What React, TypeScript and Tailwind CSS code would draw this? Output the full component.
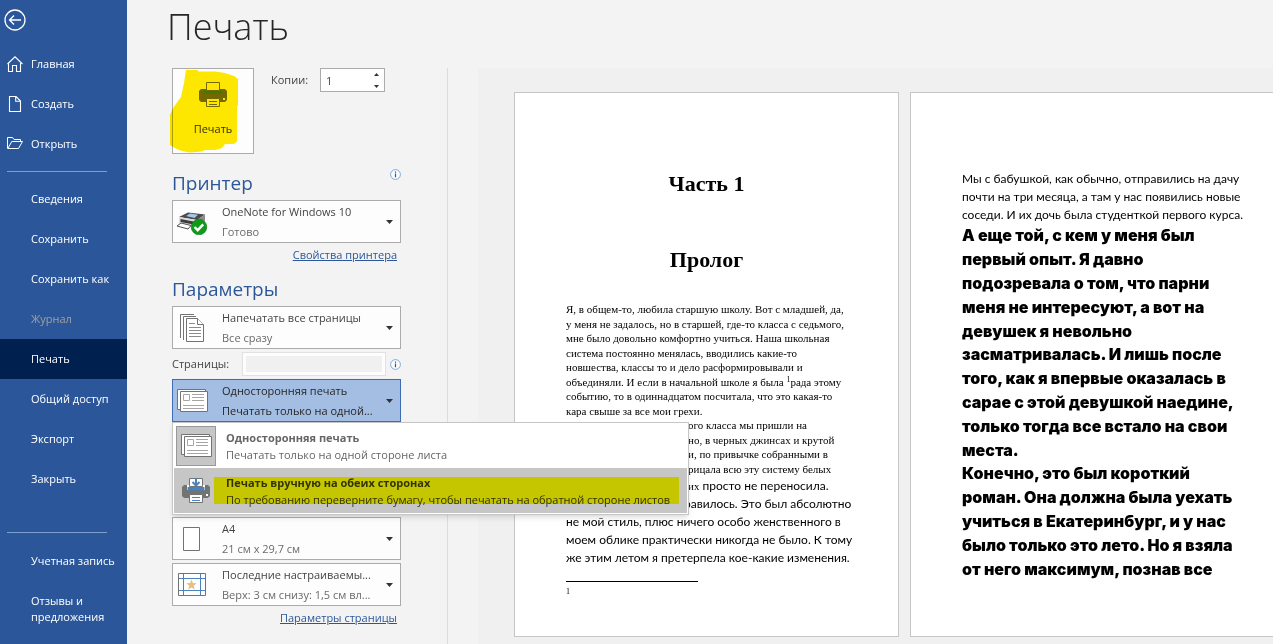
import type { ReactNode } from 'react';
import clsx from 'clsx';

const UI_FONT = 'font-["Open_Sans","Noto_Sans",sans-serif]';

function BackIcon() {
  return (
    <svg width="22" height="22" viewBox="0 0 22 22" fill="none" stroke="#fff" strokeWidth="1.3">
      <circle cx="11" cy="11" r="10" />
      <path d="M17 11H5.5M10 6.5 5.5 11l4.500 4.500" />
    </svg>
  );
}

function HomeIcon() {
  return (
    <svg width="16" height="16" viewBox="0 0 16 16" fill="none" stroke="#fff" strokeWidth="1.100">
      <path d="M.5 8 8 .8 15.500 8M1.500 7v8.500h4V9.500h4v6h4V7" />
    </svg>
  );
}

function NewIcon() {
  return (
    <svg width="16" height="16" viewBox="0 0 16 16" fill="none" stroke="#fff" strokeWidth="1.100">
      <path d="M2.500.5h6.500l4.500 4.500v10.500h-11zM8.700.5v4.800h4.800" />
    </svg>
  );
}

function OpenIcon() {
  return (
    <svg width="16" height="16" viewBox="0 0 16 16" fill="none" stroke="#fff">
      <path d="M.5 12.500V1.500h5l1.500 2h6.500v2M.8 12.500h10.700l4-7H4.800l-4 7" />
    </svg>
  );
}

function InfoIcon() {
  return (
    <svg width="11" height="11" viewBox="0 0 11 11" fill="none">
      <circle cx="5.500" cy="5.500" r="4.900" fill="#fdfdfd" stroke="#82a6dc" />
      <path d="M5.500 4.600v3.600M5.500 2.500v1.200" stroke="#2b579a" strokeWidth="1.200" />
    </svg>
  );
}

function PrinterIcon({ manual = false }: { manual?: boolean }) {
  return (
    <svg width="28" height="26" viewBox="0 0 28 26" fill="none">
      <path d="M2 7h24l2 2v9l-2 2H2l-2-2V9z" fill="#737373" />
      <path d="M5 7h18v5H5z" fill={manual ? '#fff' : '#4a82bd'} />
      <path d="M7.500.5h13v8h-13z" fill="#fdfdfd" stroke="#737373" />
      {manual && <path d="M5.500 9v3.500h17V9" fill="#4a82bd" />}
      {manual && <path d="M14 0v7M10.500 4 14 7.500 17.500 4" stroke="#4a82bd" strokeWidth="2" />}
      <path d="M7.500 16.500h13v8h-13z" fill="#fdfdfd" stroke="#737373" />
      <path d="M10 19.500h8M10 22.500h8" stroke={manual ? '#4a82bd' : '#737373'} />
      <path d="M24 16h2v2h-2z" fill="#fdfdfd" />
    </svg>
  );
}

function ReadyPrinterIcon() {
  return (
    <svg width="32" height="26" viewBox="0 0 32 26" fill="none">
      <path d="M3 8 12 3.500l17 2-8 5.500z" fill="#4a4a4a" />
      <path d="m10 7 4-2.500 8 1.200-3.500 3.300z" fill="#a5c8ea" />
      <path d="m3 8 18 3v8L3 14.500z" fill="#dcdcdc" />
      <path d="m21 11 8-5.500v6l-8 7.500z" fill="#8b8b8b" />
      <path d="m4.500 10 13 2.500v3l-13-2.500z" fill="#3c3c3c" />
      <path d="m1 17 4-3 10 2.500-3 3.500z" fill="#fff" stroke="#555" />
      <circle cx="23" cy="18" r="7.800" fill="#109a1a" stroke="#0b7a13" strokeWidth=".6" />
      <path d="m18.500 18 3.200 3.200 5.500-5.800" stroke="#fff" strokeWidth="2.400" />
    </svg>
  );
}

function PagesIcon() {
  return (
    <svg width="24" height="28" viewBox="0 0 24 28" fill="#fff" stroke="#737373">
      <path d="M.5 24V.5H14" />
      <path d="M3.500 26V2.500H16" />
      <path d="M6.500 4.500h11l6 6v17h-17z" />
      <path d="M17.500 4.500v6h6" />
      <path d="M9 9.500h6M9 13.500h12M9 16.500h12M9 19.500h12M9 22.500h12" stroke="#8c8c8c" />
    </svg>
  );
}

function OneSidedIcon() {
  return (
    <svg width="31" height="24" viewBox="0 0 31 24" fill="#fff" stroke="#737373">
      <path d="M3 20.500H.5V.5H28.500v2" />
      <path d="M3.500 2.500h27v20h-27z" />
      <path d="M6.500 5.500h6v6h-6zM15 5.500h12M15 8.500h12M15 11.500h12M6 16.500h21M6 19.500h21" stroke="#a6a6a6" />
    </svg>
  );
}

function PaperIcon() {
  return (
    <svg width="18" height="24" viewBox="0 0 18 24" fill="#fff" stroke="#737373">
      <path d="M.5.5h16v23H.5z" />
    </svg>
  );
}

function MarginsIcon() {
  return (
    <svg width="28" height="23" viewBox="0 0 28 23" fill="none">
      <path d="M.5.5h27v22H.5z" fill="#fff" stroke="#737373" />
      <path d="M5.500 1v21M22.500 1v21M1 5.500h26M1 17.500h26" stroke="#4a82bd" />
      <path d="m13.500 6.500 1.400 3.600 3.800.2-3 2.400 1 3.800-3.200-2.100-3.200 2.100 1-3.800-3-2.400 3.800-.2z" fill="#eabf7c" />
    </svg>
  );
}

function Rule() {
  return <hr className="ml-[7px] w-[100px] border-[#7da0d0]" />;
}

function NavItem({ icon, label, active, disabled }: { icon?: ReactNode; label: string; active?: boolean; disabled?: boolean }) {
  return (
    <button
      type="button"
      disabled={disabled}
      aria-current={active ? 'page' : undefined}
      className={clsx(
        'flex h-10 w-full items-center pl-[7px] text-left whitespace-nowrap',
        active && 'bg-[#002050]',
        disabled ? 'text-[#a0a0a0]' : 'text-white',
      )}
    >
      <span className="w-6 shrink-0">{icon}</span>
      {label}
    </button>
  );
}

function Sidebar() {
  return (
    <nav className="w-[127px] shrink-0 bg-[#2b579a] text-white">
      <button type="button" aria-label="Назад" className="mt-[9px] mb-[13px] ml-1 block">
        <BackIcon />
      </button>
      <NavItem icon={<HomeIcon />} label="Главная" />
      <NavItem icon={<NewIcon />} label="Создать" />
      <NavItem icon={<OpenIcon />} label="Открыть" />
      <div className="py-[7px]">
        <Rule />
      </div>
      <NavItem label="Сведения" />
      <NavItem label="Сохранить" />
      <NavItem label="Сохранить как" />
      <NavItem label="Журнал" disabled />
      <NavItem label="Печать" active />
      <NavItem label="Общий доступ" />
      <NavItem label="Экспорт" />
      <NavItem label="Закрыть" />
      <div className="pt-[33px] pb-2">
        <Rule />
      </div>
      <NavItem label="Учетная запись" />
      <button type="button" className="mt-3 block pl-[31px] text-left leading-4">
        Отзывы и предложения
      </button>
    </nav>
  );
}

function Combo({ icon, title, note, open }: { icon: ReactNode; title: string; note: string; open?: boolean }) {
  return (
    <button
      type="button"
      aria-haspopup="listbox"
      aria-expanded={!!open}
      className={clsx(
        'flex h-[43px] w-full items-center border pr-[7px] text-left leading-5',
        open ? 'border-[#3e6db5] bg-[#a3bde3] text-[#262626]' : 'border-[#ababab] bg-[#fdfdfd] text-[#444]',
      )}
    >
      <span className="flex w-[38px] shrink-0 justify-center">{icon}</span>
      <span className="ml-[11px] min-w-0 flex-1">
        <span className="block truncate">{title}</span>
        <span className={clsx('block truncate', !open && 'text-[#6a6a6a]')}>{note}</span>
      </span>
      <svg width="7" height="4" viewBox="0 0 7 4" className="ml-2 shrink-0">
        <path d="M0 0h7L3.500 4z" fill="#333" />
      </svg>
    </button>
  );
}

function DuplexMenu() {
  return (
    <div
      role="listbox"
      aria-label="Двусторонняя печать"
      className="absolute top-full left-0 z-10 w-[517px] border border-[#c6c6c6] bg-white p-px leading-[17px] shadow-md"
    >
      <button type="button" role="option" aria-selected="true" className="flex h-11 w-full items-center pl-[2px] text-left text-[#666]">
        <span className="flex size-10 shrink-0 items-center justify-center border border-[#999] bg-[#c6c6c6]">
          <OneSidedIcon />
        </span>
        <span className="ml-[10px] whitespace-nowrap">
          <b className="block">Односторонняя печать</b>
          Печатать только на одной стороне листа
        </span>
      </button>
      <button type="button" role="option" aria-selected="false" className="relative flex h-[45px] w-full items-center bg-[#c6c6c6] pl-[2px] text-left text-[#333]">
        <span className="flex size-10 shrink-0 items-center justify-center">
          <PrinterIcon manual />
        </span>
        <span className="ml-[10px] whitespace-nowrap">
          <b className="block">Печать вручную на обеих сторонах</b>
          По требованию переверните бумагу, чтобы печатать на обратной стороне листов
        </span>
        <span className="absolute top-[9px] right-2 left-10 h-[27px] bg-[#ffff00] mix-blend-multiply" />
      </button>
    </div>
  );
}

function Settings() {
  return (
    <section className="w-[276px] shrink-0 border-r border-[#dcdcdc] pr-[46px] text-[#444]">
      <div className="flex items-start">
        <button type="button" className="relative flex h-[86px] w-[82px] flex-col items-center border border-[#ababab] bg-[#fdfdfd] pt-[13px] text-[#333]">
          <PrinterIcon />
          <span className="mt-[11px] leading-5">Печать</span>
          <svg width="70" height="86" viewBox="0 0 70 86" className="absolute -top-px -left-[3px] mix-blend-multiply">
            <path
              d="M16 2h12v1.500h17l10 1.500 9 3 4 3v26l-1 2v33q0 3-4 4h-8q-2 4-6 5l-4 1H35l-3 1.500-12 1q-9-1-17-5.500L0 77V47l3-7 8-11 3-14z"
              fill="#ffe900"
            />
          </svg>
        </button>
        <label htmlFor="copies" className="ml-[17px] w-[49px] leading-6">
          Копии:
        </label>
        <span className="relative">
          <input id="copies" type="text" defaultValue="1" className="block h-6 w-[65px] border border-[#ababab] bg-white pl-[5px] text-[#444] outline-none" />
          <span className="absolute top-[5px] right-[6px] flex flex-col gap-[9px]">
            <button type="button" aria-label="Больше" className="block">
              <svg width="5" height="3" viewBox="0 0 5 3"><path d="M0 3h5L2.500 0z" fill="#333" /></svg>
            </button>
            <button type="button" aria-label="Меньше" className="block">
              <svg width="5" height="3" viewBox="0 0 5 3"><path d="M0 0h5L2.500 3z" fill="#333" /></svg>
            </button>
          </span>
        </span>
      </div>

      <div className="mt-[15px] flex h-[31px] items-start justify-between">
        <h2 className="text-[19px] leading-7 text-[#2b579a]">Принтер</h2>
        <InfoIcon />
      </div>
      <Combo icon={<ReadyPrinterIcon />} title="OneNote for Windows 10" note="Готово" />
      <div className="mt-1 pr-1 text-right leading-4">
        <a href="#printer" className="text-[#2b579a] underline">Свойства принтера</a>
      </div>

      <h2 className="mt-3 h-[31px] text-[19px] leading-7 text-[#2b579a]">Параметры</h2>
      <Combo icon={<PagesIcon />} title="Напечатать все страницы" note="Все сразу" />
      <div className="my-[3px] flex h-6 items-center">
        <label htmlFor="pages" className="w-[70px] shrink-0">Страницы:</label>
        <input id="pages" type="text" className="mr-auto h-6 w-36 border-4 border-[#fdfdfd] bg-[#f0f0f0] outline outline-1 -outline-offset-1 outline-[#e1e1e1]" />
        <InfoIcon />
      </div>
      <div className="relative mb-[95px]">
        <Combo icon={<OneSidedIcon />} title="Односторонняя печать" note="Печатать только на одной..." open />
        <DuplexMenu />
      </div>
      <Combo icon={<PaperIcon />} title="A4" note="21 см x 29,7 см" />
      <div className="h-[3px]" />
      <Combo icon={<MarginsIcon />} title="Последние настраиваемы..." note="Верх: 3 см снизу: 1,5 см вл..." />
      <div className="mt-1 pr-1 text-right leading-4">
        <a href="#page-setup" className="text-[#2b579a] underline">Параметры страницы</a>
      </div>
    </section>
  );
}

const serifLines = [
  'Я, в общем-то, любила старшую школу. Вот с младшей, да,',
  'у меня не задалось, но в старшей, где-то класса с седьмого,',
  'мне было довольно комфортно учиться. Наша школьная',
  'система постоянно менялась, вводились какие-то',
  'новшества, классы то и дело расформировывали и',
];

// these run out from under the open menu
const coveredLines = [
  'ого класса мы пришли на',
  'но, в черных джинсах и крутой',
  'и, по привычке собранными в',
  'рицала всю эту систему белых',
];

const sansLines = [
  'не мой стиль, плюс ничего особо женственного в',
  'моем облике практически никогда не было. К тому',
  'же этим летом я претерпела кое-какие изменения.',
];

const introLines = [
  'Мы с бабушкой, как обычно, отправились на дачу',
  'почти на три месяца, а там у нас появились новые',
  'соседи. И их дочь была студенткой первого курса.',
];

const blackLines = [
  'А еще той, с кем у меня был',
  'первый опыт. Я давно',
  'подозревала о том, что парни',
  'меня не интересуют, а вот на',
  'девушек я невольно',
  'засматривалась. И лишь после',
  'того, как я впервые оказалась в',
  'сарае с этой девушкой наедине,',
  'только тогда все встало на свои',
  'места.',
  'Конечно, это был короткий',
  'роман. Она должна была уехать',
  'учиться в Екатеринбург, и у нас',
  'было только это лето. Но я взяла',
  'от него максимум, познав все',
];

function Sheet({ children }: { children: ReactNode }) {
  return (
    <article className="h-[545px] w-[385px] shrink-0 border border-[#c6c6c6] bg-white px-[51px] whitespace-nowrap text-black">
      {children}
    </article>
  );
}

function FirstPage() {
  return (
    <Sheet>
      <div className='text-center font-["Liberation_Serif",serif] text-[22px] leading-7 font-bold'>
        <h3 className="mt-[77px]">Часть 1</h3>
        <h3 className="mt-12">Пролог</h3>
      </div>
      <div className='mt-7 font-["Liberation_Serif",serif] text-[11px] *:block *:odd:leading-[15px] *:even:leading-[14px]'>
        {serifLines.map((line) => (
          <span key={line}>{line}</span>
        ))}
        <span>
          объединяли. И если в начальной школе я была <sup className="text-[8px] leading-none">1</sup>рада этому
        </span>
        <span>событию, то в одиннадцатом посчитала, что это какая-то</span>
        <span>кара свыше за все мои грехи.</span>
        {coveredLines.map((line) => (
          <span key={line} className="pl-[122px]">{line}</span>
        ))}
      </div>
      <div className='mt-px font-["Lato",sans-serif] text-[12px] leading-[18px] *:block'>
        <span className="pl-[122px]">
          <span className='font-["Liberation_Serif",serif] text-[11px]'>их</span> просто не переносила.
        </span>
        <span className="pl-[118px]">равилось. Это был абсолютно</span>
        {sansLines.map((line) => (
          <span key={line}>{line}</span>
        ))}
      </div>
      <hr className="mt-[14px] w-[132px] border-black" />
      <p className='mt-1 font-["Liberation_Serif",serif] text-[8px] leading-3'>1</p>
    </Sheet>
  );
}

function SecondPage() {
  return (
    <Sheet>
      <div className='mt-[77px] font-["Lato",sans-serif] text-[12px] leading-[18px] *:block'>
        {introLines.map((line) => (
          <span key={line}>{line}</span>
        ))}
      </div>
      <div className='font-["Inter",sans-serif] text-base leading-6 font-black *:block [&>*:nth-child(5n+1)]:leading-[23px]'>
        {blackLines.map((line) => (
          <span key={line}>{line}</span>
        ))}
      </div>
    </Sheet>
  );
}

export default function App() {
  return (
    <div className={clsx('flex min-h-screen overflow-hidden bg-[#f3f3f3] text-[11px]', UI_FONT)}>
      <Sidebar />
      <main className="flex min-w-0 flex-1 flex-col">
        <h1 className="h-[68px] pt-[3px] pl-10 text-[36px] leading-[48px] font-light text-[#262626]">Печать</h1>
        <div className="flex flex-1 pl-[45px]">
          <Settings />
          <section aria-label="Предварительный просмотр" className="ml-[30px] flex min-w-0 flex-1 gap-[11px] overflow-hidden bg-[#f0f0f0] pt-6 pl-9">
            <FirstPage />
            <SecondPage />
          </section>
        </div>
      </main>
    </div>
  );
}
